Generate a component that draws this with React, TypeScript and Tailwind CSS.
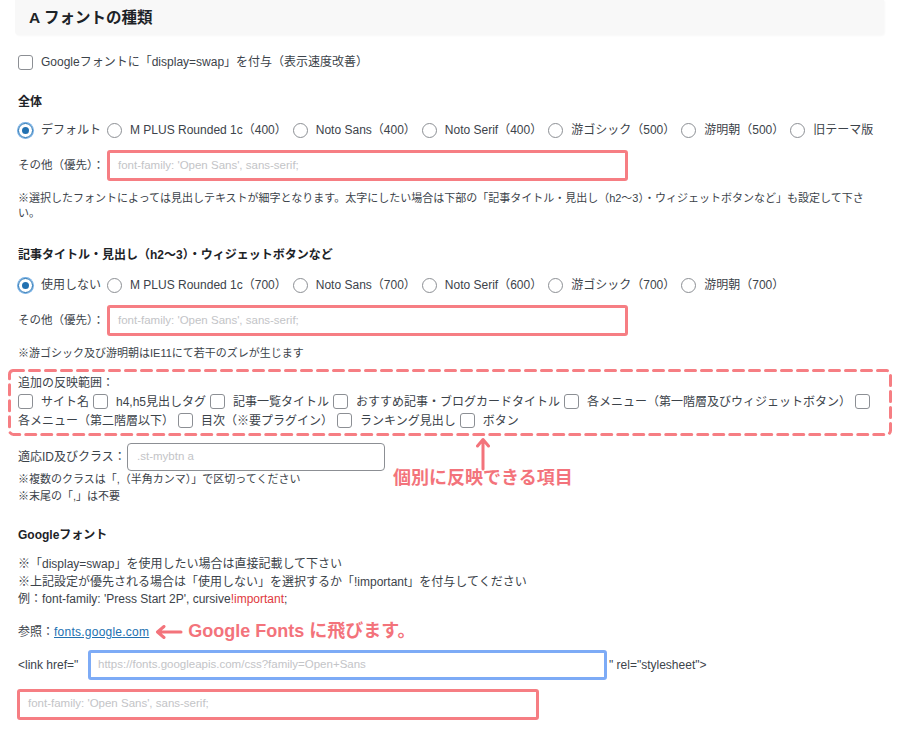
import React from "react";

const FONT = '"Liberation Sans", "Noto Sans CJK JP", sans-serif';

function Radio({ checked }: { checked?: boolean }) {
  return checked ? (
    <span className="inline-flex h-[15px] w-[15px] shrink-0 items-center justify-center rounded-full border border-[#2271b1] shadow-[0_0_0_1px_#72aee6]">
      <span className="h-[7px] w-[7px] rounded-full bg-[#2271b1]" />
    </span>
  ) : (
    <span className="inline-block h-[15px] w-[15px] shrink-0 rounded-full border border-[#8c8f94] bg-white" />
  );
}

function Check() {
  return <span className="inline-block h-[15px] w-[15px] shrink-0 rounded-[3px] border border-[#8c8f94] bg-white" />;
}

function RadioRow({ items }: { items: string[] }) {
  return (
    <div className="flex h-[18px] items-center text-[12px] text-[#3c434a]">
      {items.map((t, i) => (
        <span key={i} className="mr-[6px] inline-flex items-center">
          <Radio checked={i === 0} />
          <span className="ml-[8px] whitespace-nowrap">{t}</span>
        </span>
      ))}
    </div>
  );
}

function RedInput({ className = "" }: { className?: string }) {
  return (
    <div className={"flex h-[31px] items-center rounded-[3px] border-[3px] border-[#f67e83] bg-white pl-[8px] text-[11.5px] text-[#c3c4c7] " + className}>
      font-family: 'Open Sans', sans-serif;
    </div>
  );
}

export default function App() {
  const checkItems = [
    "サイト名",
    "h4,h5見出しタグ",
    "記事一覧タイトル",
    "おすすめ記事・ブログカードタイトル",
    "各メニュー（第一階層及びウィジェットボタン）",
    "各メニュー（第二階層以下）",
    "目次（※要プラグイン）",
    "ランキング見出し",
    "ボタン",
  ];
  return (
    <div className="h-[735px] w-[900px] overflow-hidden bg-white text-[#3c434a]" style={{ fontFamily: FONT }}>
      <div className="pl-[15px] pr-[16px]">
        <div className="flex h-[35px] items-center rounded-b-[4px] bg-[#f8f8f8] pl-[14px] text-[15.5px] font-bold text-[#1d2327] shadow-[1px_1px_2px_rgba(0,0,0,0.03)]">
          A フォントの種類
        </div>
      </div>

      <div className="relative pl-[18px] pr-[15px]">
        <div className="mt-[18px] flex h-[18px] items-center text-[12px]">
          <Check />
          <span className="ml-[8px]">Googleフォントに「display=swap」を付与（表示速度改善）</span>
        </div>

        <div className="mt-[22px] flex h-[18px] items-center text-[12px] font-bold text-[#1d2327]">全体</div>
        <div className="mt-[10px]">
          <RadioRow
            items={["デフォルト", "M PLUS Rounded 1c（400）", "Noto Sans（400）", "Noto Serif（400）", "游ゴシック（500）", "游明朝（500）", "旧テーマ版"]}
          />
        </div>
        <div className="mt-[11px] flex items-center">
          <span className="w-[89px] whitespace-nowrap text-[11.5px]">その他（優先）：</span>
          <RedInput className="w-[521px]" />
        </div>
        <p className="mt-[10px] text-[11px] leading-[15px]">
          ※選択したフォントによっては見出しテキストが細字となります。太字にしたい場合は下部の「記事タイトル・見出し（h2〜3）・ウィジェットボタンなど」も設定して下さい。
        </p>

        <div className="mt-[25px] flex h-[18px] items-center text-[12px] font-bold text-[#1d2327]">
          記事タイトル・見出し（h2〜3）・ウィジェットボタンなど
        </div>
        <div className="mt-[12px]">
          <RadioRow items={["使用しない", "M PLUS Rounded 1c（700）", "Noto Sans（700）", "Noto Serif（600）", "游ゴシック（700）", "游明朝（700）"]} />
        </div>
        <div className="mt-[11px] flex items-center">
          <span className="w-[89px] whitespace-nowrap text-[11.5px]">その他（優先）：</span>
          <RedInput className="w-[521px]" />
        </div>
        <p className="mt-[10px] text-[11px] leading-[15px]">※游ゴシック及び游明朝はIE11にて若干のズレが生じます</p>

        <div className="relative -ml-[10px] mt-[8px] h-[67px] w-[884px] pl-[10px] pt-[4px] text-[12px]">
          <svg className="pointer-events-none absolute left-0 top-0" width="884" height="67" viewBox="0 0 884 67">
            <rect x="1.5" y="1.5" width="881" height="64" rx="4" fill="none" stroke="#f67e83" strokeWidth="3" strokeDasharray="10 6" strokeLinecap="round" />
          </svg>
          <div className="flex h-[19px] items-center">追加の反映範囲：</div>
          <div className="flex flex-wrap items-center pr-[8px]">
            {checkItems.map((t, i) => (
              <React.Fragment key={i}>
                <span className="mr-[8px] flex h-[19px] items-center">
                  <Check />
                </span>
                <span className="mr-[4px] flex h-[19px] items-center whitespace-nowrap">{t}</span>
              </React.Fragment>
            ))}
          </div>
        </div>

        <div className="relative">
          <div className="mt-[7px] flex items-center">
            <span className="w-[109px] whitespace-nowrap text-[12px]">適応ID及びクラス：</span>
            <div className="flex h-[28px] w-[258px] items-center rounded-[4px] border border-[#8c8f94] bg-white pl-[9px] text-[11.5px] text-[#c3c4c7]">
              .st-mybtn a
            </div>
          </div>
          <p className="text-[11px] leading-[17px]">※複数のクラスは「,（半角カンマ）」で区切ってください</p>
          <p className="text-[11px] leading-[17px]">※末尾の「,」は不要</p>

          <svg className="absolute left-[458px] top-[-6px]" width="14" height="34" viewBox="0 0 14 34">
            <path d="M7 32 V3 M1.5 9 L7 2.5 L12.5 9" fill="none" stroke="#f3737b" strokeWidth="3" strokeLinecap="round" strokeLinejoin="round" />
          </svg>
          <span className="absolute left-[375px] top-[24px] text-[18px] font-bold leading-[22px] text-[#f3737b]">個別に反映できる項目</span>
        </div>

        <div className="mt-[21px] flex h-[18px] items-center text-[12px] font-bold text-[#1d2327]">Googleフォント</div>
        <div className="mt-[12px] text-[12px] leading-[17.5px]">
          <p>※「display=swap」を使用したい場合は直接記載して下さい</p>
          <p>※上記設定が優先される場合は「使用しない」を選択するか「!important」を付与してください</p>
          <p>
            例：font-family: 'Press Start 2P', cursive<span className="text-[#e0393e]">!important</span>;
          </p>
        </div>

        <div className="mt-[14px] flex h-[18px] items-center text-[12px]">
          <span>参照：</span>
          <span className="text-[#2271b1] underline tracking-[0.02em]">fonts.google.com</span>
          <svg className="ml-[6px]" width="28" height="14" viewBox="0 0 28 14">
            <path d="M26 7 H3 M9 1.5 L2.5 7 L9 12.5" fill="none" stroke="#f3737b" strokeWidth="3" strokeLinecap="round" strokeLinejoin="round" />
          </svg>
          <span className="ml-[5px] text-[18px] font-bold text-[#f3737b]">Google Fonts に飛びます。</span>
        </div>

        <div className="mt-[9px] flex items-center text-[12px]">
          <span className="w-[70px] whitespace-nowrap">&lt;link href="</span>
          <div className="flex h-[30px] w-[519px] items-center rounded-[3px] border-[3px] border-[#7dabf6] bg-white pl-[7px] text-[11.5px] text-[#c3c4c7]">
            https://fonts.googleapis.com/css?family=Open+Sans
          </div>
          <span className="ml-[2px]">" rel="stylesheet"&gt;</span>
        </div>

        <div className="-ml-[1px] mt-[9px]">
          <RedInput className="h-[30px] w-[522px]" />
        </div>
      </div>
    </div>
  );
}
